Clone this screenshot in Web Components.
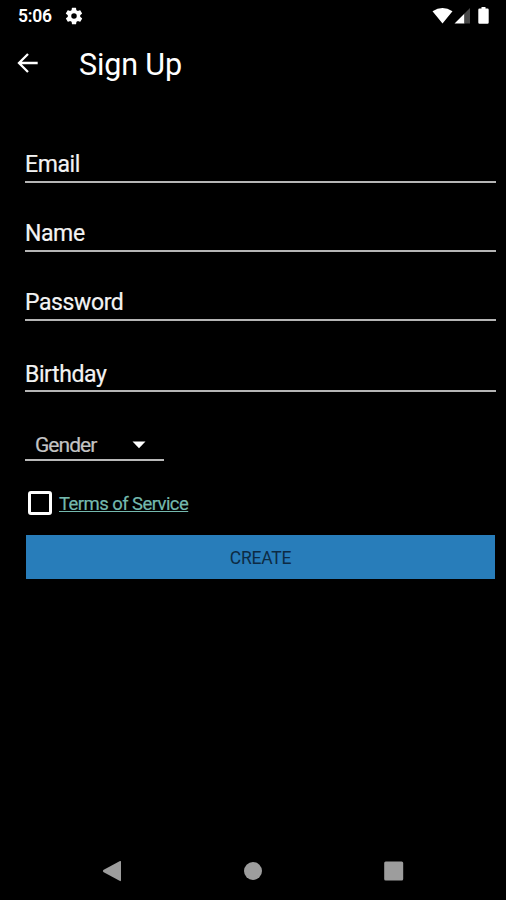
<!DOCTYPE html>
<html lang="en"><head><meta charset="utf-8"><title>Sign Up</title>
<style>
html,body{margin:0;background:#000}
body{font-family:Roboto,"Liberation Sans",sans-serif;color:#fff}
</style></head><body>
<signup-screen></signup-screen>
<script>
const define=(name,html)=>customElements.define(name,class extends HTMLElement{
  constructor(){super();this.attachShadow({mode:'open'}).innerHTML=html;}
});
define('status-bar',`<style>
:host{display:flex;height:32px;box-sizing:border-box;padding:0 14px 0 18px;align-items:center;font-size:17.5px;letter-spacing:-.25px;font-weight:600;line-height:32px}
svg{display:block}.gear{margin-left:12px}.gap{flex:1}
</style><slot></slot>
<svg class="gear" width="20" height="20" viewBox="0 0 24 24"><path fill="#fff" fill-rule="evenodd" d="M19.4 13c.04-.3.06-.65.06-1s-.02-.7-.07-1l2.1-1.6c.2-.15.25-.4.12-.63l-2-3.46c-.12-.22-.38-.3-.6-.22l-2.5 1a7.3 7.3 0 0 0-1.7-1l-.37-2.64a.5.5 0 0 0-.5-.42h-4a.5.5 0 0 0-.48.42l-.38 2.64c-.6.25-1.17.6-1.69 1l-2.5-1c-.23-.08-.48 0-.6.22l-2 3.46c-.13.22-.07.48.12.63L4.6 11a8 8 0 0 0 0 2l-2.1 1.6c-.2.16-.25.42-.12.64l2 3.46c.12.22.38.3.6.22l2.5-1c.52.4 1.08.74 1.7 1l.37 2.64c.04.24.25.42.5.42h4c.25 0 .46-.18.49-.42l.38-2.64a7 7 0 0 0 1.69-1l2.5 1c.22.08.48 0 .6-.22l2-3.46c.12-.22.07-.48-.12-.64zM12 15.3a3.3 3.3 0 1 1 0-6.6 3.3 3.3 0 0 1 0 6.6z"/></svg>
<span class="gap"></span>
<svg width="60" height="20" viewBox="0 0 60 20"><path fill="#fff" d="M.5 5.2Q10.500-1.200 20.500 5.200L10.500 17.500zM22.500 17.500L32.500 7.500V17.500z"/><path fill="#484848" d="M32.500 7.500L38 2V17.500H32.500z"/><path fill="#fff" d="M47.500 2.500H49.500V1H53.500V2.500H55.500Q56.700 2.500 56.700 3.700V16.500Q56.700 17.700 55.500 17.700H47.500Q46.300 17.700 46.300 16.500V3.700Q46.300 2.500 47.500 2.500z"/></svg>`);
define('app-bar',`<style>
:host{display:flex;box-sizing:border-box;height:64px;align-items:center;padding:2px 0 0 17px;font-size:30.5px;letter-spacing:-.15px;line-height:62px}
svg{display:block;margin:-5px 40px 0 0}
</style><svg width="22" height="22" viewBox="0 0 22 22" fill="none" stroke="#fff" stroke-width="2.3"><path d="M20.700 11H3M11 2L2 11L11 20"/></svg><slot></slot>`);
define('form-field',`<style>
:host{display:flex;flex-direction:column;justify-content:space-between;height:33px;font-size:23px;letter-spacing:-.4px;line-height:30px;color:#f3f3f3;-webkit-text-stroke:.2px #f3f3f3}
i{height:2px;background:#b5b5b5}
</style><slot></slot><i></i>`);
define('gender-select',`<style>
:host{display:flex;box-sizing:border-box;width:139px;height:31px;padding:1px 18px 0 10px;justify-content:space-between;font-size:21px;letter-spacing:-.95px;line-height:28px;color:#c4c4c4;border-bottom:2px solid #b9b9b9;-webkit-text-stroke:.2px #c4c4c4}
svg{display:block;margin-top:10px}
</style><slot></slot><svg width="14" height="8" viewBox="0 0 14 8"><path fill="#fff" d="M.5.5h13L7 7.300z"/></svg>`);
define('terms-check',`<style>
:host{display:flex;align-items:center;height:24px;padding-left:3px;font-size:18.5px;letter-spacing:-.57px;line-height:24px;color:#74b9ae;-webkit-text-stroke:.2px #74b9ae}
b{box-sizing:border-box;width:24px;height:24px;border:3px solid #fff;border-radius:3px;margin-right:7px}
span{margin-top:1px;text-decoration:underline;text-decoration-thickness:1px;text-underline-offset:1px;text-decoration-skip-ink:none}
</style><b></b><span><slot></slot></span>`);
define('create-button',`<style>
:host{display:block;height:44px;line-height:46px;margin:0 1px;text-align:center;font-size:17.5px;letter-spacing:-.2px;color:#0d2b44;background:#287dba}
</style><slot></slot>`);
define('nav-bar',`<style>
:host{display:flex;height:60px;box-sizing:border-box;align-items:center;justify-content:space-between;padding:2px 102px 0}
svg{display:block}
</style>
<svg width="20" height="22" viewBox="0 0 20 22"><path fill="#9d9d9d" d="M18 1Q19 .5 19 2V20Q19 21.500 18 21L1.300 12Q.5 11 1.300 10z"/></svg>
<svg width="18" height="18" viewBox="0 0 18 18"><circle cx="9" cy="9" r="9" fill="#9d9d9d"/></svg>
<svg width="20" height="20" viewBox="0 0 20 20"><rect x=".2" y=".5" width="19" height="19" rx="1.5" fill="#9d9d9d"/></svg>`);
define('signup-screen',`<style>
:host{display:flex;flex-direction:column;width:506px;height:900px;background:#000}
main{flex:1;padding:54px 10px 0 25px}
.n,.p{margin-top:36px}.b{margin-top:39px;height:32px}
gender-select{margin-top:38px}terms-check{margin-top:30px}create-button{margin-top:20px}
</style><status-bar>5:06</status-bar><app-bar>Sign Up</app-bar>
<main><form-field>Email</form-field><form-field class="n">Name</form-field><form-field class="p">Password</form-field><form-field class="b">Birthday</form-field>
<gender-select>Gender</gender-select><terms-check>Terms of Service</terms-check><create-button>CREATE</create-button></main><nav-bar></nav-bar>`);
</script></body></html>
